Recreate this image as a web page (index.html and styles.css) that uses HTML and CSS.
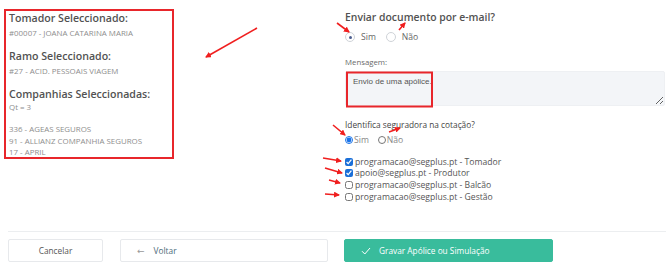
FILE: index.html
```html
<!DOCTYPE html>
<html lang="pt">
<head>
<meta charset="utf-8">
<link rel="stylesheet" href="styles.css">
</head>
<body>
<div class="page">
  <div class="top">
    <div class="summary">
      <h3 class="sum-title">Tomador Seleccionado:</h3>
      <p class="sum-text">#00007 - JOANA CATARINA MARIA</p>
      <h3 class="sum-title gap">Ramo Seleccionado:</h3>
      <p class="sum-text">#27 - ACID. PESSOAIS VIAGEM</p>
      <h3 class="sum-title gap">Companhias Seleccionadas:</h3>
      <p class="sum-list">Qt = 3<br><br>336 - AGEAS SEGUROS<br>91 - ALLIANZ COMPANHIA SEGUROS<br>17 - APRIL</p>
    </div>
    <div class="options">
      <h3 class="opt-title">Enviar documento por e-mail?</h3>
      <div class="radio-row">
        <label class="soft-radio"><span class="circle on"></span>Sim</label>
        <label class="soft-radio"><span class="circle"></span>Não</label>
      </div>
      <div class="field-label">Mensagem:</div>
      <textarea class="message" readonly>Envio de uma apólice.</textarea>
      <div class="question">Identifica seguradora na cotação?</div>
      <div class="native-row">
        <label class="nat"><input type="radio" name="ident" checked>Sim</label>
        <label class="nat"><input type="radio" name="ident">Não</label>
      </div>
      <div class="checks">
        <label class="chk"><input type="checkbox" checked>programacao@segplus.pt - Tomador</label>
        <label class="chk"><input type="checkbox" checked>apoio@segplus.pt - Produtor</label>
        <label class="chk"><input type="checkbox">programacao@segplus.pt - Balcão</label>
        <label class="chk"><input type="checkbox">programacao@segplus.pt - Gestão</label>
      </div>
    </div>
  </div>
  <div class="footer">
    <button class="btn btn-cancel">Cancelar</button>
    <button class="btn btn-back"><span class="back-arrow">&#8592;</span>Voltar</button>
    <button class="btn btn-save"><svg class="check" width="10" height="8" viewBox="0 0 10 8"><path d="M1 4.2 L3.8 7 L9 1" fill="none" stroke="#fff" stroke-width="1"/></svg>Gravar Apólice ou Simulação</button>
  </div>
  <svg class="marks" width="672" height="264" viewBox="0 0 672 264">
    <defs>
      <marker id="ah" markerWidth="6" markerHeight="6" refX="5" refY="3" orient="auto" markerUnits="userSpaceOnUse">
        <path d="M0 0 L6 3 L0 6 Z" fill="#f01f1f"/>
      </marker>
    </defs>
    <g stroke="#f01f1f" stroke-width="1.6" fill="none" marker-end="url(#ah)">
      <line x1="257" y1="28" x2="206" y2="57"/>
      <line x1="337" y1="23" x2="349" y2="32"/>
      <line x1="399" y1="30" x2="405" y2="23"/>
      <line x1="333" y1="125" x2="345" y2="135"/>
      <line x1="389" y1="132" x2="400" y2="128"/>
      <line x1="323" y1="158" x2="341" y2="161"/>
      <line x1="325" y1="168" x2="342" y2="173"/>
      <line x1="329" y1="180" x2="340" y2="183"/>
      <line x1="325" y1="194" x2="339" y2="195"/>
    </g>
    <rect x="347" y="72.5" width="85" height="34" fill="none" stroke="#e8262b" stroke-width="2"/>
  </svg>
</div>
</body>
</html>
```
FILE: styles.css
```css
* { box-sizing: border-box; }
body {
  margin: 0;
  background: #fff;
  font-family: "Open Sans", "DejaVu Sans", sans-serif;
  color: #444;
}
.page {
  position: relative;
  width: 672px;
  height: 264px;
  overflow: hidden;
}
.top {
  display: grid;
  grid-template-columns: 341px 1fr;
  padding: 9px 7px 0 4px;
}
.summary {
  width: 170px;
  border: 2px solid #e8262b;
  padding: 0 0 0 3px;
  height: 150px;
}
.sum-title {
  margin: 0;
  font-size: 10.6px;
  font-weight: 600;
  line-height: 14px;
  color: #525252;
}
.sum-title.gap { margin-top: 10px; }
.sum-text {
  margin: 2px 0 0;
  font-size: 7.9px;
  line-height: 12px;
  color: #8e8e8e;
}
.sum-list {
  margin: 1px 0 0;
  font-size: 7.9px;
  line-height: 11.2px;
  color: #8e8e8e;
}
.options { display: flex; flex-direction: column; }
.opt-title {
  margin: 0;
  font-size: 10.4px;
  font-weight: 600;
  line-height: 17px;
  color: #525252;
}
.radio-row {
  display: flex;
  gap: 10px;
  margin-top: 3px;
  height: 16px;
  align-items: center;
}
.soft-radio {
  display: flex;
  align-items: center;
  gap: 6px;
  font-size: 8.6px;
  color: #666;
}
.circle {
  width: 10px;
  height: 10px;
  border: 1px solid #cfd3d8;
  border-radius: 50%;
  display: flex;
  align-items: center;
  justify-content: center;
}
.circle.on::after {
  content: "";
  width: 3px;
  height: 3px;
  border-radius: 50%;
  background: #4d5f8f;
}
.field-label {
  margin-top: 12px;
  font-size: 7.8px;
  line-height: 11px;
  color: #6a6a6a;
}
.message {
  margin-top: 3px;
  width: 320px;
  height: 35px;
  background: #f3f5f8;
  border: 1px solid #eef0f3;
  border-radius: 2px;
  padding: 5px 7px;
  font-family: "Liberation Sans", Arial, sans-serif;
  font-size: 8px;
  color: #555;
  resize: vertical;
  outline: none;
}
.question {
  margin-top: 13px;
  font-size: 8.3px;
  line-height: 12px;
  color: #444;
}
.native-row {
  display: flex;
  gap: 9px;
  margin-top: 3px;
  height: 12px;
  align-items: center;
}
.nat {
  display: flex;
  align-items: center;
  gap: 1px;
  font-size: 8.6px;
  color: #888;
}
.nat input {
  margin: 0;
  width: 8px;
  height: 8px;
  accent-color: #1a73e8;
}
.checks {
  margin-top: 10px;
  display: flex;
  flex-direction: column;
}
.chk {
  display: flex;
  align-items: center;
  gap: 2px;
  height: 11.6px;
  font-size: 8.6px;
  color: #555;
}
.chk input {
  margin: 0;
  width: 8px;
  height: 8px;
  accent-color: #1a6fd8;
}
.footer {
  position: absolute;
  left: 8px;
  right: 6px;
  top: 231px;
  border-top: 1px solid #eceef0;
  padding-top: 7px;
  display: flex;
}
.btn {
  height: 23px;
  border: 1px solid #e7e9ec;
  background: #fff;
  border-radius: 2px;
  font-family: "Open Sans", "DejaVu Sans", sans-serif;
  font-size: 8.3px;
  color: #555;
  display: flex;
  align-items: center;
  padding: 0;
}
.btn-cancel { width: 95px; justify-content: center; }
.btn-back {
  width: 208px;
  margin-left: 17px;
  padding-left: 16px;
  color: #4c6c7a;
}
.back-arrow { font-size: 9px; color: #999; margin-right: 9px; }
.btn-save {
  width: 209px;
  margin-left: 16px;
  padding-left: 16px;
  background: #39bc9c;
  border-color: #39bc9c;
  color: #fff;
}
.check { margin-right: 8px; }
.marks {
  position: absolute;
  left: 0;
  top: 0;
  pointer-events: none;
}
```
